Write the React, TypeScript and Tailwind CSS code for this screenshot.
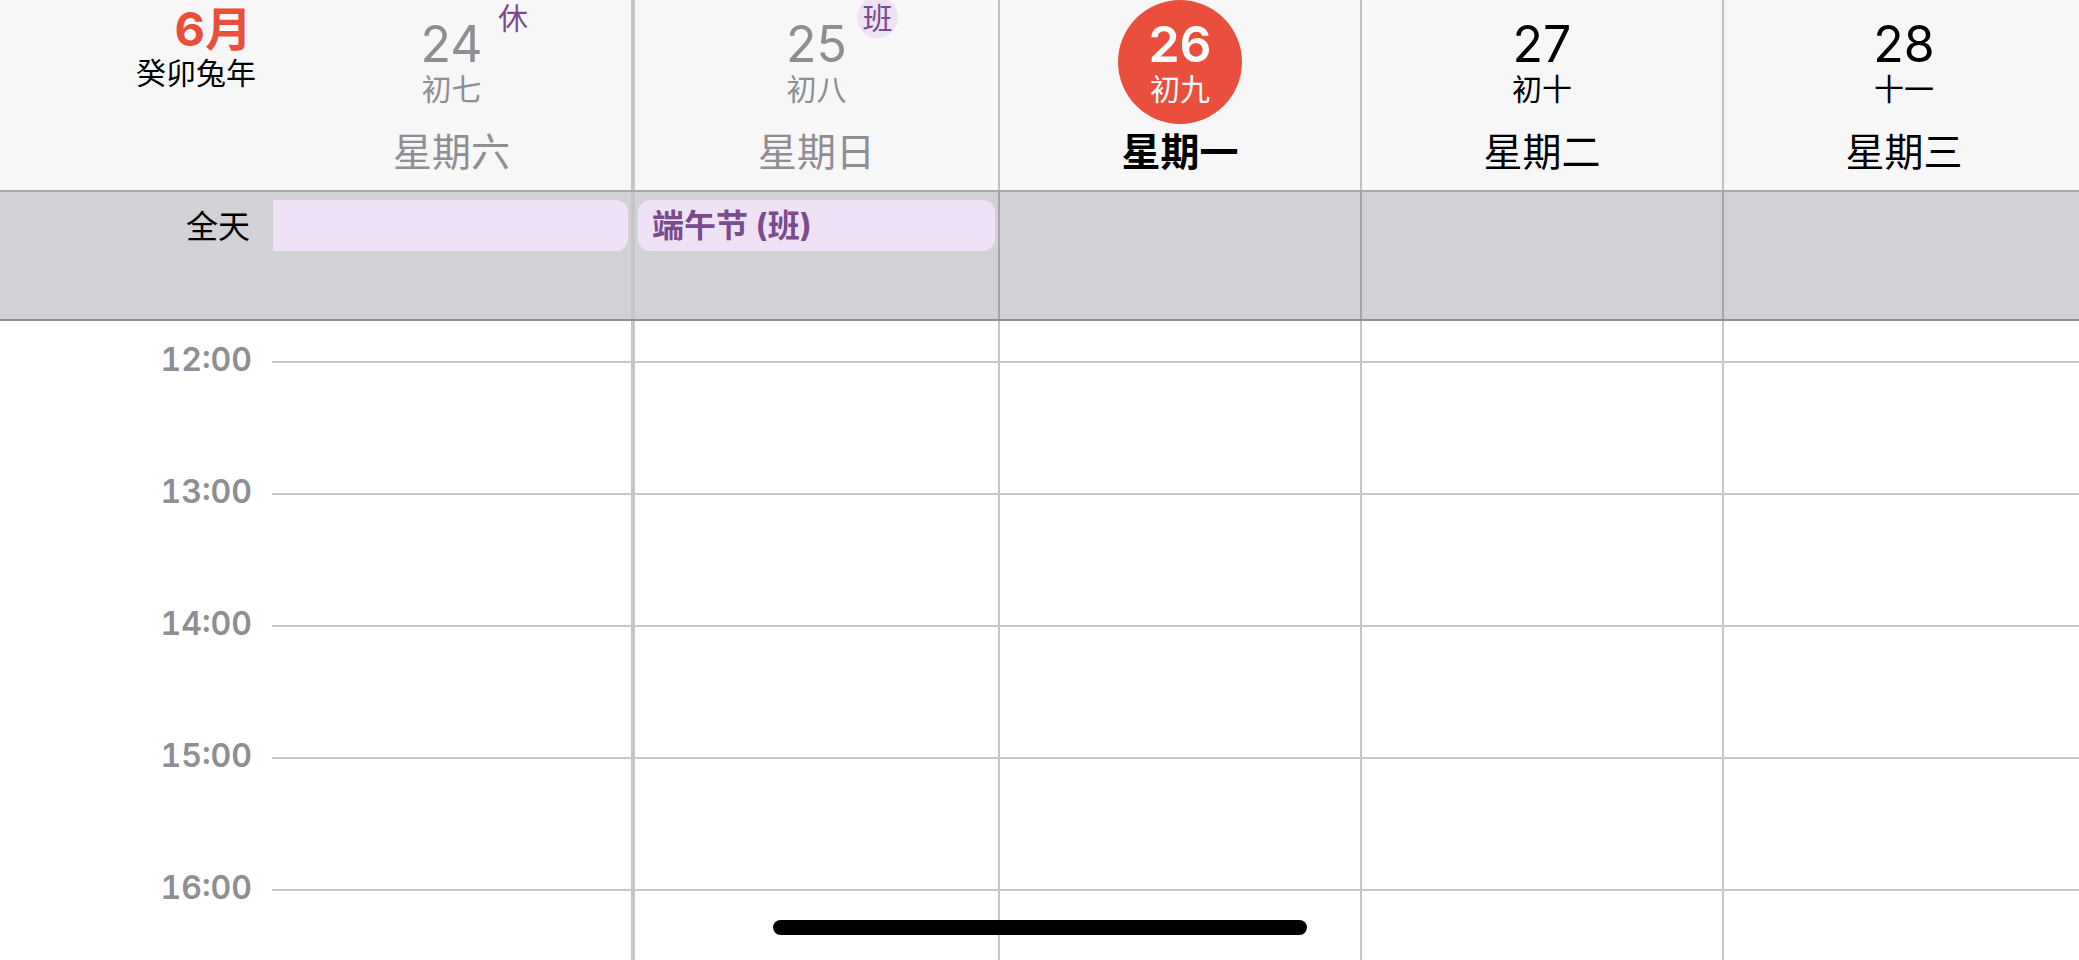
import React from "react";

type Day = {
  num: string;
  lunar: string;
  week: string;
  tone: "past" | "today" | "future";
  badge?: { text: string; filled: boolean };
  width: string;
  border: string;
};

const days: Day[] = [
  { num: "24", lunar: "初七", week: "星期六", tone: "past", badge: { text: "休", filled: false }, width: "w-[363px]", border: "border-r-4 border-[#c6c6c8]" },
  { num: "25", lunar: "初八", week: "星期日", tone: "past", badge: { text: "班", filled: true }, width: "w-[365px]", border: "border-r-2 border-[rgba(60,60,67,0.29)]" },
  { num: "26", lunar: "初九", week: "星期一", tone: "today", width: "w-[362px]", border: "border-r-2 border-[rgba(60,60,67,0.29)]" },
  { num: "27", lunar: "初十", week: "星期二", tone: "future", width: "w-[362px]", border: "border-r-2 border-[rgba(60,60,67,0.29)]" },
  { num: "28", lunar: "十一", week: "星期三", tone: "future", width: "w-[362px]", border: "border-r-2 border-[rgba(60,60,67,0.29)]" },
];

const hours = ["12:00", "13:00", "14:00", "15:00", "16:00"];

/* ─── header cell ─────────────────────────── */
function DayHead({ d }: { d: Day }) {
  const today = d.tone === "today";
  const color = today ? "text-white" : d.tone === "past" ? "text-[#8e8e93]" : "text-black";
  return (
    <div className={`${d.width} ${d.border} shrink-0 h-full flex flex-col items-center`}>
      <div
        className={`w-[124px] h-[124px] rounded-full flex flex-col items-center ${
          today ? "bg-[#ea4f3e]" : ""
        }`}
      >
        <span className={`relative mt-[19px] text-[50px] leading-none ${today ? "font-semibold" : ""} ${color}`}>
          {d.num}
          {d.badge && (
            <span
              className={`absolute left-full ml-[10px] top-[-22px] w-[41px] h-[41px] rounded-full flex items-center justify-center text-[30px] leading-none text-[#7a4b8e] ${
                d.badge.filled ? "bg-[#efe1f6]" : ""
              }`}
            >
              {d.badge.text}
            </span>
          )}
        </span>
        <span className={`mt-[5px] text-[30px] leading-none ${color}`}>{d.lunar}</span>
      </div>
      <span
        className={`mt-[8px] text-[39px] leading-none ${
          today ? "font-bold text-black" : d.tone === "past" ? "text-[#8e8e93]" : "text-black"
        }`}
      >
        {d.week}
      </span>
    </div>
  );
}

/* ─── one row of the time grid ───────────── */
function GridRow({ label, h }: { label?: string; h: string }) {
  return (
    <div className={`flex ${h} shrink-0`}>
      <div className="w-[272px] shrink-0 flex justify-end items-start pr-[20px]">
        {label && (
          <span className="-mt-[17px] text-[32px] leading-none font-semibold tabular-nums text-[#8e8e93]">
            {label}
          </span>
        )}
      </div>
      {days.map((d) => (
        <div
          key={d.num}
          className={`${d.width} ${d.border} shrink-0 h-full ${
            label ? "border-t-2 border-t-[#c8c8ca]" : ""
          }`}
        />
      ))}
    </div>
  );
}

export default function App() {
  return (
    <div className="relative w-[2079px] h-[960px] overflow-hidden bg-white font-['Inter','Noto_Sans_CJK_SC',sans-serif]">
      {/* Header */}
      <div className="flex h-[192px] bg-[#f7f7f7] border-b-2 border-[#a9a9ab]">
        <div className="w-[272px] shrink-0 flex flex-col items-end pr-[16px]">
          <span className="mt-[5px] mr-[4px] text-[47px] leading-none font-bold text-[#ea4f3e]">6月</span>
          <span className="mt-[6px] text-[30px] leading-none text-black">癸卯兔年</span>
        </div>
        {days.map((d) => (
          <DayHead key={d.num} d={d} />
        ))}
      </div>

      {/* All-day */}
      <div className="flex h-[129px] bg-[#d1d1d6] border-b-2 border-[#8e8e93]">
        <div className="w-[272px] shrink-0 flex justify-end pr-[22px] pt-[19px]">
          <span className="text-[32px] leading-none text-black">全天</span>
        </div>
        {days.map((d, i) => (
          <div key={d.num} className={`${d.width} ${d.border} shrink-0 h-full pt-[8px]`}>
            {i === 0 && <div className="ml-[1px] mr-[3px] h-[51px] rounded-r-[12px] bg-[#efe1f6]" />}
            {i === 1 && (
              <div className="mx-[3px] h-[51px] rounded-[12px] bg-[#efe1f6] flex items-center pl-[14px]">
                <span className="text-[32px] leading-none font-bold text-[#7a4b8e]">端午节 (班)</span>
              </div>
            )}
          </div>
        ))}
      </div>

      {/* Time grid */}
      <div className="flex flex-col">
        <GridRow h="h-[40px]" />
        {hours.map((t) => (
          <GridRow key={t} label={t} h="h-[132px]" />
        ))}
      </div>

      {/* Home indicator */}
      <div className="absolute bottom-[25px] left-1/2 -translate-x-1/2 w-[534px] h-[15px] rounded-full bg-black" />
    </div>
  );
}
